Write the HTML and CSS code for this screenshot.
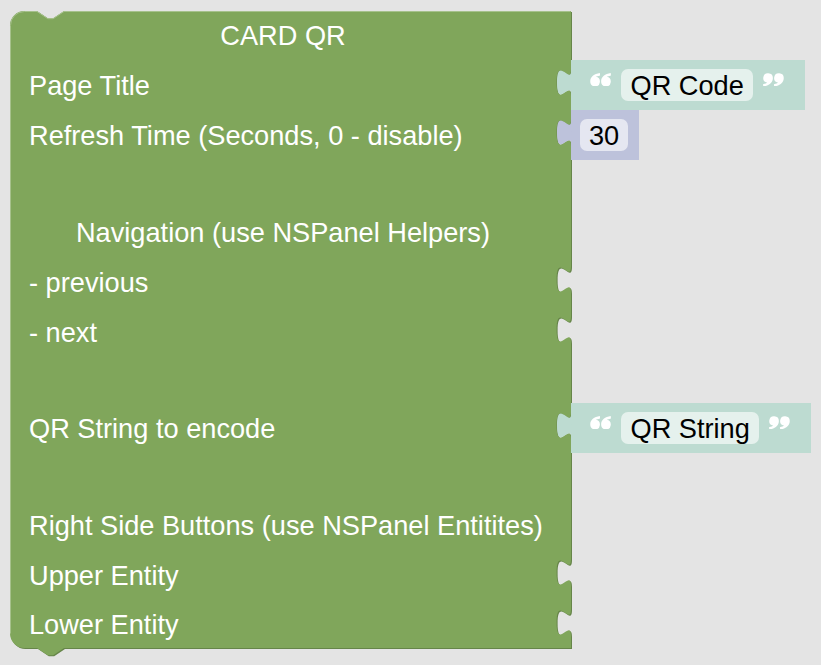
FILE: index.html
```html
<!DOCTYPE html>
<html>
<head>
<meta charset="utf-8">
<title>CARD QR</title>
<link rel="stylesheet" href="styles.css">
</head>
<body>
<div class="workspace">
  <div class="block">
    <svg class="block-shape" width="563" height="648" viewBox="0 0 563 648">
      <path class="shape-dark" transform="translate(1,1)" d="M0,14.4 A14.4,14.4 0 0 1 14.4,0 H27 l10.8,7.2 h5.4 l10.8,-7.2 H561 V58 c0,18 -14.4,-14.4 -14.4,13.5 s14.4,-4.5 14.4,13.5 V108 c0,18 -14.4,-14.4 -14.4,13.5 s14.4,-4.5 14.4,13.5 V255 c0,18 -14.4,-14.4 -14.4,13.5 s14.4,-4.5 14.4,13.5 V305 c0,18 -14.4,-14.4 -14.4,13.5 s14.4,-4.5 14.4,13.5 V401 c0,18 -14.4,-14.4 -14.4,13.5 s14.4,-4.5 14.4,13.5 V548 c0,18 -14.4,-14.4 -14.4,13.5 s14.4,-4.5 14.4,13.5 V598 c0,18 -14.4,-14.4 -14.4,13.5 s14.4,-4.5 14.4,13.5 V637 H54 l-10.8,7.2 h-5.4 l-10.8,-7.2 H14.4 A14.4,14.4 0 0 1 0,622.6 Z"/>
      <path class="shape-main" d="M0,14.4 A14.4,14.4 0 0 1 14.4,0 H27 l10.8,7.2 h5.4 l10.8,-7.2 H561 V58 c0,18 -14.4,-14.4 -14.4,13.5 s14.4,-4.5 14.4,13.5 V108 c0,18 -14.4,-14.4 -14.4,13.5 s14.4,-4.5 14.4,13.5 V255 c0,18 -14.4,-14.4 -14.4,13.5 s14.4,-4.5 14.4,13.5 V305 c0,18 -14.4,-14.4 -14.4,13.5 s14.4,-4.5 14.4,13.5 V401 c0,18 -14.4,-14.4 -14.4,13.5 s14.4,-4.5 14.4,13.5 V548 c0,18 -14.4,-14.4 -14.4,13.5 s14.4,-4.5 14.4,13.5 V598 c0,18 -14.4,-14.4 -14.4,13.5 s14.4,-4.5 14.4,13.5 V637 H54 l-10.8,7.2 h-5.4 l-10.8,-7.2 H14.4 A14.4,14.4 0 0 1 0,622.6 Z"/>
      <path class="shape-light" d="M0.5,622.6 V14.4 A13.9,13.9 0 0 1 14.4,0.5 H27 l10.8,7.2 h5.4 l10.8,-7.2 H560.5"/>
    </svg>

    <div class="row row-title"><span class="label label-center">CARD QR</span></div>

    <div class="row">
      <span class="label">Page Title</span>
      <div class="value value-text">
        <svg class="tab" viewBox="0 0 14.4 27"><path class="tab-text" d="M14.4,27 c0,-18 -14.4,14.4 -14.4,-13.5 s14.4,4.5 14.4,-13.5 Z"/></svg>
        <svg class="quote" viewBox="0 0 20 13"><path d="M0.2,8.2C0.2,3.8 3.9,0.8 9.4,0.1L9.6,2.3C7.6,2.8 6.2,3.3 5.6,3.67A4.6,4.6 0 1 1 0.2,8.2Z M10.6,8.2C10.6,3.8 14.3,0.8 19.8,0.1L20,2.3C18,2.8 16.6,3.3 16,3.67A4.6,4.6 0 1 1 10.6,8.2Z"/></svg>
        <span class="field field-text">QR Code</span>
        <svg class="quote" viewBox="0 0 20 13"><path transform="rotate(180 10 6.5)" d="M0.2,8.2C0.2,3.8 3.9,0.8 9.4,0.1L9.6,2.3C7.6,2.8 6.2,3.3 5.6,3.67A4.6,4.6 0 1 1 0.2,8.2Z M10.6,8.2C10.6,3.8 14.3,0.8 19.8,0.1L20,2.3C18,2.8 16.6,3.3 16,3.67A4.6,4.6 0 1 1 10.6,8.2Z"/></svg>
      </div>
    </div>

    <div class="row">
      <span class="label">Refresh Time (Seconds, 0 - disable)</span>
      <div class="value value-num">
        <svg class="tab" viewBox="0 0 14.4 27"><path class="tab-num" d="M14.4,27 c0,-18 -14.4,14.4 -14.4,-13.5 s14.4,4.5 14.4,-13.5 Z"/></svg>
        <span class="field field-num">30</span>
      </div>
    </div>

    <div class="row spacer-a"></div>

    <div class="row"><span class="label label-center">Navigation (use NSPanel Helpers)</span></div>
    <div class="row"><span class="label">- previous</span></div>
    <div class="row"><span class="label">- next</span></div>

    <div class="row spacer-b"></div>

    <div class="row">
      <span class="label">QR String to encode</span>
      <div class="value value-text">
        <svg class="tab" viewBox="0 0 14.4 27"><path class="tab-text" d="M14.4,27 c0,-18 -14.4,14.4 -14.4,-13.5 s14.4,4.5 14.4,-13.5 Z"/></svg>
        <svg class="quote" viewBox="0 0 20 13"><path d="M0.2,8.2C0.2,3.8 3.9,0.8 9.4,0.1L9.6,2.3C7.6,2.8 6.2,3.3 5.6,3.67A4.6,4.6 0 1 1 0.2,8.2Z M10.6,8.2C10.6,3.8 14.3,0.8 19.8,0.1L20,2.3C18,2.8 16.6,3.3 16,3.67A4.6,4.6 0 1 1 10.6,8.2Z"/></svg>
        <span class="field field-text">QR String</span>
        <svg class="quote" viewBox="0 0 20 13"><path transform="rotate(180 10 6.5)" d="M0.2,8.2C0.2,3.8 3.9,0.8 9.4,0.1L9.6,2.3C7.6,2.8 6.2,3.3 5.6,3.67A4.6,4.6 0 1 1 0.2,8.2Z M10.6,8.2C10.6,3.8 14.3,0.8 19.8,0.1L20,2.3C18,2.8 16.6,3.3 16,3.67A4.6,4.6 0 1 1 10.6,8.2Z"/></svg>
      </div>
    </div>

    <div class="row spacer-a"></div>

    <div class="row"><span class="label">Right Side Buttons (use NSPanel Entitites)</span></div>
    <div class="row"><span class="label">Upper Entity</span></div>
    <div class="row row-last"><span class="label">Lower Entity</span></div>
  </div>
</div>
</body>
</html>
```

FILE: styles.css
```css
html, body {
  margin: 0;
  padding: 0;
}

body {
  width: 821px;
  height: 665px;
  overflow: hidden;
  background: #e4e4e4;
  font-family: "Liberation Sans", Arial, sans-serif;
}

.workspace {
  position: relative;
  width: 821px;
  height: 665px;
}

.block {
  position: absolute;
  left: 10px;
  top: 11px;
  width: 800px;
}

.block-shape {
  position: absolute;
  left: 0;
  top: 0;
  overflow: visible;
  z-index: 0;
}

.shape-main {
  fill: #80a65b;
}

.shape-dark {
  fill: #668549;
}

.shape-light {
  fill: none;
  stroke: #a6c18c;
  stroke-width: 1;
}

.row {
  position: relative;
  z-index: 1;
  display: flex;
  align-items: center;
  height: 50px;
}

.row-title {
  height: 49px;
}

.spacer-a {
  height: 47px;
}

.spacer-b {
  height: 46px;
}

.row-last {
  height: 48px;
}

.label {
  flex: none;
  width: 561px;
  box-sizing: border-box;
  padding-left: 19px;
  padding-top: 1px;
  color: #fff;
  font-size: 27.2px;
  line-height: 1;
  white-space: nowrap;
}

.label-center {
  text-align: center;
  padding-right: 34px;
}

.value {
  flex: none;
  align-self: flex-start;
  position: relative;
  display: flex;
  align-items: center;
  height: 50px;
}

.value-text {
  background: #bddbd1;
  padding: 0 21px 0 19px;
  gap: 10px;
}

.value-num {
  background: #bdc2db;
  padding: 0 11px 0 9px;
}

.tab {
  position: absolute;
  left: -14.4px;
  top: 9px;
  width: 14.4px;
  height: 27px;
  overflow: visible;
}

.tab-text {
  fill: #bddbd1;
}

.tab-num {
  fill: #bdc2db;
}

.quote {
  flex: none;
  width: 21px;
  height: 13.6px;
  margin-bottom: 11px;
  fill: #fff;
}

.field {
  height: 32px;
  line-height: 33px;
  border-radius: 7px;
  padding: 0 9.5px;
  color: #000;
  font-size: 27.2px;
  white-space: nowrap;
}

.field-text {
  background: #e5f1ed;
}

.field-num {
  background: #e5e7f1;
  padding: 0 9px;
}
```
